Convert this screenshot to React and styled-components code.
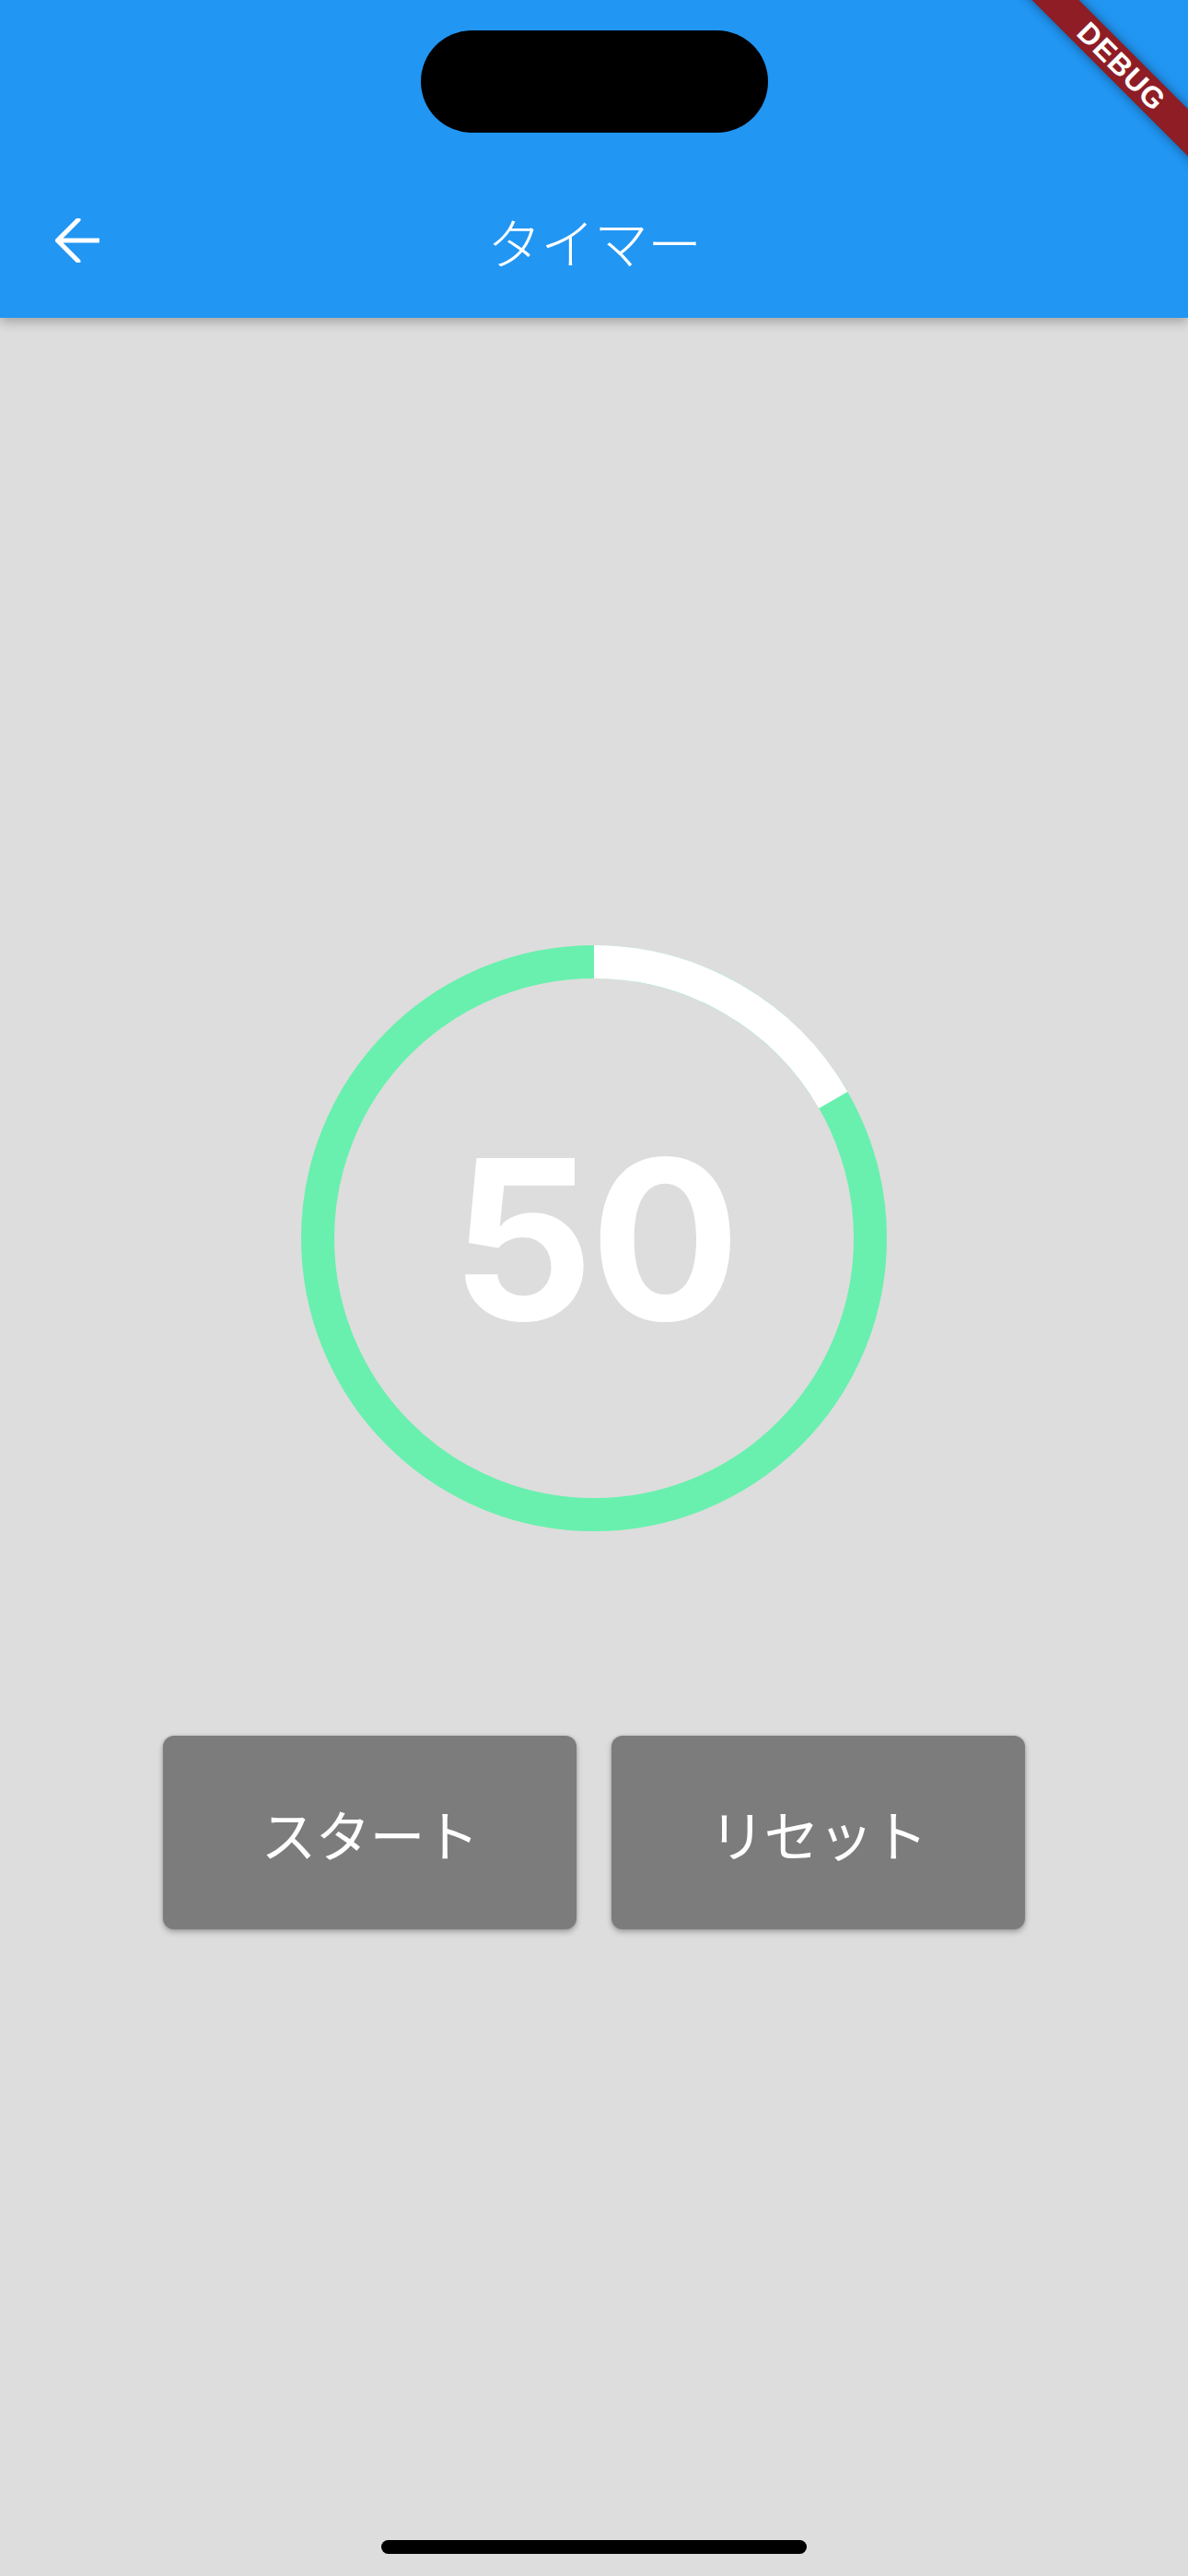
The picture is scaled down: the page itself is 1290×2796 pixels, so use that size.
import React from "react";
import styled, { createGlobalStyle } from "styled-components";

const Global = createGlobalStyle`
  html, body { margin: 0; padding: 0; background: #dddddd; }
  body { font-family: "Noto Sans CJK JP", "Noto Sans", sans-serif; }
`;

const Screen = styled.div`
  position: relative;
  width: 1290px;
  min-height: 2796px;
  overflow: hidden;
  background: #dddddd;
  display: flex;
  flex-direction: column;
`;

const AppBar = styled.header`
  position: relative;
  z-index: 2;
  height: 345px;
  background: #2196f3;
  box-shadow: 0 4px 12px rgba(0, 0, 0, 0.28);
  display: flex;
  flex-direction: column;
`;

const StatusBar = styled.div`
  height: 177px;
  box-sizing: border-box;
  padding-top: 33px;
  display: flex;
  justify-content: center;
`;

const Island = styled.div`
  width: 377px;
  height: 111px;
  border-radius: 56px;
  background: #000;
`;

const Toolbar = styled.div`
  flex: 1;
  display: grid;
  grid-template-columns: 1fr auto 1fr;
  align-items: center;
`;

const BackButton = styled.button`
  justify-self: start;
  margin-left: 60px;
  padding: 0;
  border: 0;
  background: transparent;
  width: 48px;
  height: 48px;
  display: flex;
`;

const Title = styled.h1`
  margin: 0;
  font-family: "Noto Sans CJK JP", sans-serif;
  font-weight: 300;
  font-size: 59px;
  line-height: 1;
  color: #fff;
  letter-spacing: -1px;
`;

const Body = styled.main`
  flex: 1;
  display: flex;
  flex-direction: column;
  align-items: center;
  padding-top: 681px;
`;

const Dial = styled.div`
  position: relative;
  width: 636px;
  height: 636px;
  display: grid;
  place-items: center;
`;

const Ring = styled.svg`
  grid-area: 1 / 1;
  width: 636px;
  height: 636px;
`;

const Count = styled.div`
  grid-area: 1 / 1;
  font-family: Inter, "Liberation Sans", sans-serif;
  font-weight: 700;
  font-size: 242px;
  line-height: 1;
  color: #fff;
  letter-spacing: -4px;
  margin-top: 2px;
`;

const ButtonRow = styled.div`
  margin-top: 222px;
  display: flex;
  gap: 38px;
`;

const ActionButton = styled.button`
  width: 449px;
  height: 210px;
  border: 0;
  border-radius: 12px;
  background: #7c7c7c;
  color: #fff;
  font-family: "Noto Sans CJK JP", sans-serif;
  font-weight: 400;
  font-size: 60px;
  letter-spacing: -1px;
  box-shadow: 0 3px 6px rgba(0, 0, 0, 0.28), 0 0 3px rgba(0, 0, 0, 0.15);
  display: flex;
  align-items: center;
  justify-content: center;
`;

const HomeIndicator = styled.div`
  margin: auto auto 24px;
  width: 462px;
  height: 15px;
  border-radius: 8px;
  background: #000;
`;

const DebugBanner = styled.div`
  position: absolute;
  z-index: 5;
  left: 1068px;
  top: 54px;
  width: 300px;
  height: 36px;
  transform: rotate(45deg);
  background: #8e1d25;
  box-shadow: 0 0 12px rgba(0, 0, 0, 0.45);
  color: #fff;
  font-family: "Liberation Sans", Arial, sans-serif;
  font-weight: 700;
  font-size: 32px;
  line-height: 36px;
  text-align: center;
  letter-spacing: 1px;
`;

const R = 300;
const C = 318;
const elapsed = 10;
const total = 60;

function arcPath(fraction) {
  const a = fraction * 2 * Math.PI;
  const x = C + R * Math.sin(a);
  const y = C - R * Math.cos(a);
  const large = fraction > 0.5 ? 1 : 0;
  return `M ${C} ${C - R} A ${R} ${R} 0 ${large} 1 ${x} ${y}`;
}

export default function App() {
  return (
    <>
      <Global />
      <Screen>
        <AppBar>
          <StatusBar>
            <Island />
          </StatusBar>
          <Toolbar>
            <BackButton aria-label="back">
              <svg width="48" height="48" viewBox="0 0 48 48" fill="none">
                <path
                  d="M25 1.5 L2.5 24 L25 46.5 M2.5 24 H47"
                  stroke="#fff"
                  strokeWidth="5"
                  strokeLinecap="round"
                  strokeLinejoin="round"
                />
              </svg>
            </BackButton>
            <Title>タイマー</Title>
            <span />
          </Toolbar>
        </AppBar>
        <Body>
          <Dial>
            <Ring viewBox="0 0 636 636">
              <circle cx={C} cy={C} r={R} fill="none" stroke="#69f0ae" strokeWidth="36" />
              <path d={arcPath(elapsed / total)} fill="none" stroke="#ffffff" strokeWidth="36" strokeLinecap="butt" />
            </Ring>
            <Count>{total - elapsed}</Count>
          </Dial>
          <ButtonRow>
            <ActionButton>スタート</ActionButton>
            <ActionButton>リセット</ActionButton>
          </ButtonRow>
        </Body>
        <HomeIndicator />
        <DebugBanner>DEBUG</DebugBanner>
      </Screen>
    </>
  );
}
